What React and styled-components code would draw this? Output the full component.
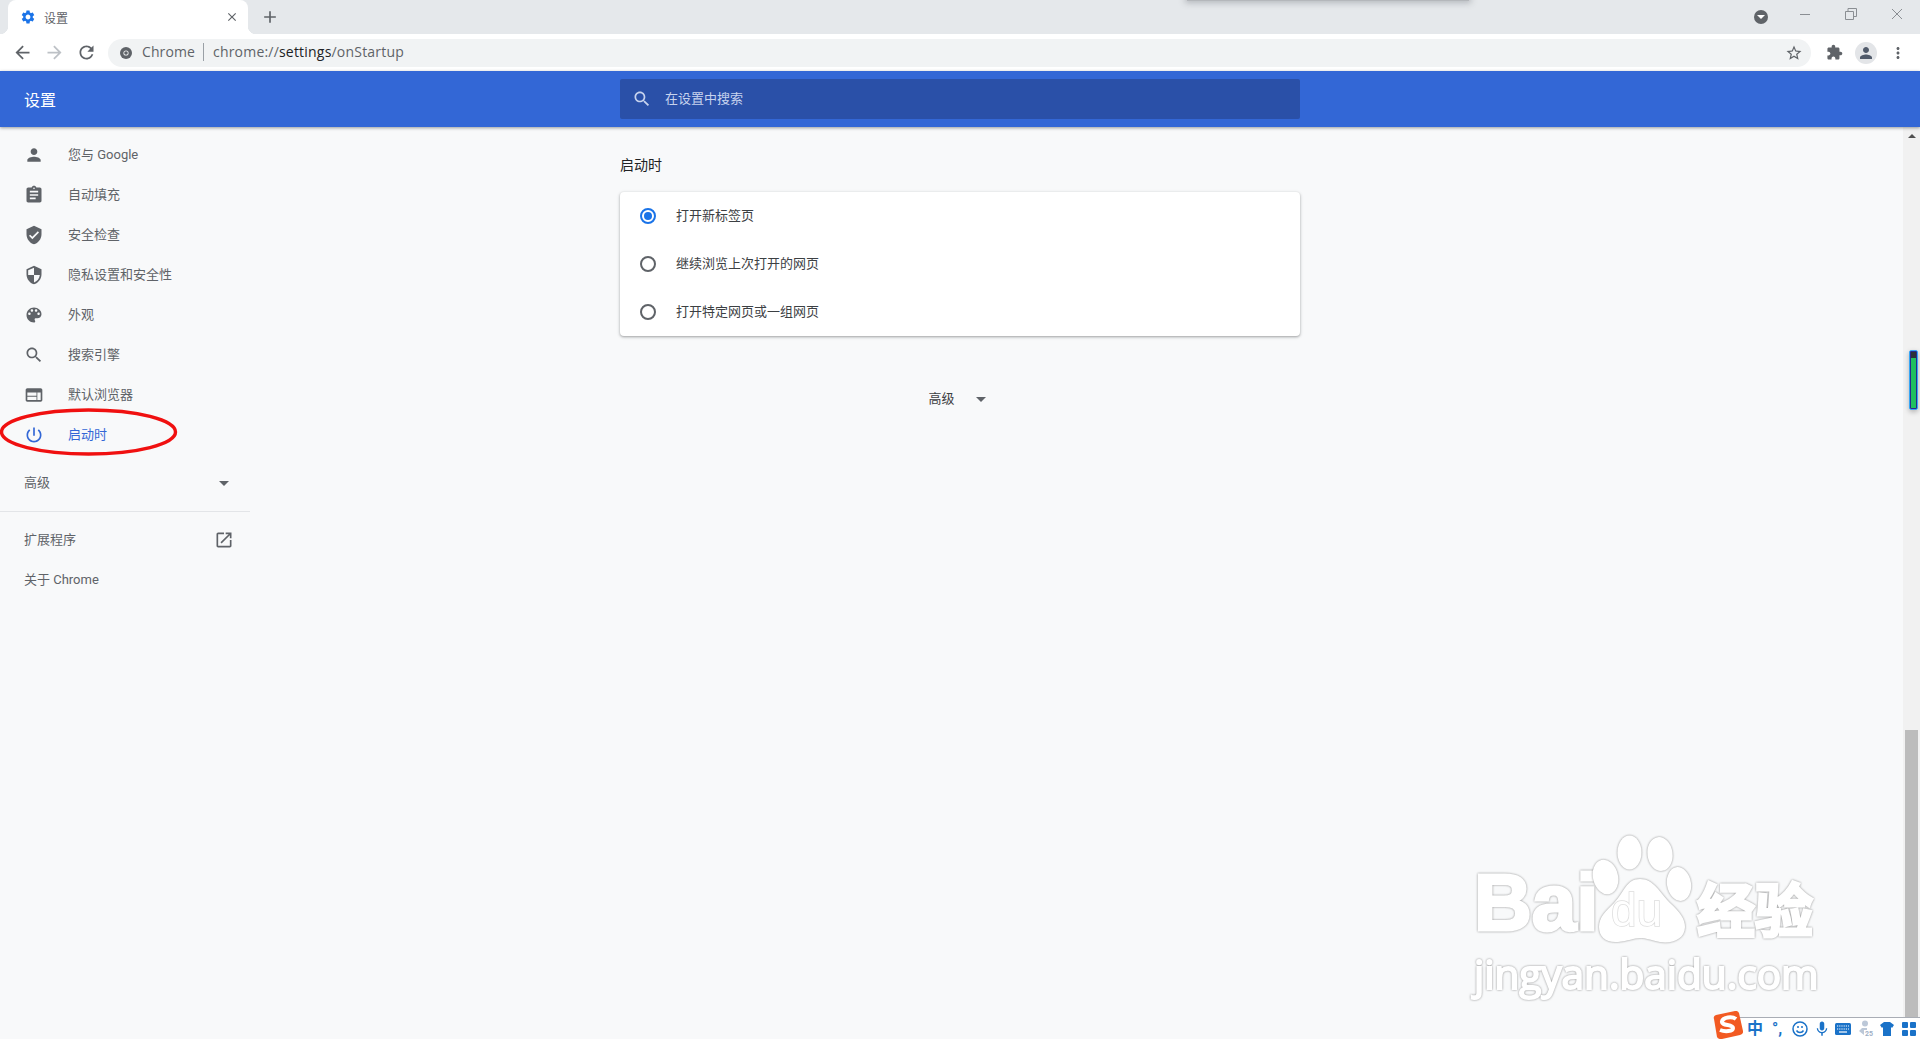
import React from "react";
import styled, { createGlobalStyle } from "styled-components";

const paths = {
  person: "M12 12c2.21 0 4-1.79 4-4s-1.79-4-4-4-4 1.79-4 4 1.79 4 4 4zm0 2c-2.67 0-8 1.34-8 4v2h16v-2c0-2.66-5.33-4-8-4z",
  assignment: "M19 3h-4.18C14.4 1.84 13.3 1 12 1c-1.3 0-2.4.84-2.82 2H5c-1.1 0-2 .9-2 2v14c0 1.1.9 2 2 2h14c1.1 0 2-.9 2-2V5c0-1.1-.9-2-2-2zm-7 0c.55 0 1 .45 1 1s-.45 1-1 1-1-.45-1-1 .45-1 1-1zm2 14H7v-2h7v2zm3-4H7v-2h10v2zm0-4H7V7h10v2z",
  verified: "M12 1L3 5v6c0 5.55 3.84 10.74 9 12 5.16-1.26 9-6.45 9-12V5l-9-4zm-2 16l-4-4 1.41-1.41L10 14.17l6.59-6.59L18 9l-8 8z",
  security: "M12 1L3 5v6c0 5.55 3.84 10.74 9 12 5.16-1.26 9-6.45 9-12V5l-9-4zm0 10.99h7c-.53 4.12-3.28 7.79-7 8.94V12H5V6.3l7-3.11v8.8z",
  palette: "M12 3c-4.97 0-9 4.03-9 9s4.03 9 9 9c.83 0 1.5-.67 1.5-1.5 0-.39-.15-.74-.39-1.01-.23-.26-.38-.61-.38-.99 0-.83.67-1.5 1.5-1.5H16c2.76 0 5-2.24 5-5 0-4.42-4.03-8-9-8zm-5.5 9c-.83 0-1.5-.67-1.5-1.5S5.67 9 6.5 9 8 9.67 8 10.5 7.33 12 6.5 12zm3-4C8.67 8 8 7.33 8 6.5S8.67 5 9.5 5s1.5.67 1.5 1.5S10.33 8 9.5 8zm5 0c-.83 0-1.5-.67-1.5-1.5S13.67 5 14.5 5s1.5.67 1.5 1.5S15.33 8 14.5 8zm3 4c-.83 0-1.5-.67-1.5-1.5S16.67 9 17.5 9s1.5.67 1.5 1.5-.67 1.5-1.5 1.5z",
  search: "M15.5 14h-.79l-.28-.27C15.41 12.59 16 11.11 16 9.5 16 5.91 13.09 3 9.5 3S3 5.91 3 9.5 5.91 16 9.5 16c1.61 0 3.09-.59 4.23-1.57l.27.28v.79l5 4.99L20.49 19l-4.99-5zm-6 0C7.01 14 5 11.99 5 9.5S7.01 5 9.5 5 14 7.01 14 9.5 11.99 14 9.5 14z",
  web: "M20 4H4c-1.1 0-2 .9-2 2v12c0 1.1.9 2 2 2h16c1.1 0 2-.9 2-2V6c0-1.1-.9-2-2-2zm-5 14H4v-4h11v4zm0-5H4V9h11v4zm5 5h-4V9h4v9z",
  power: "M13 3h-2v10h2V3zm4.83 2.17l-1.42 1.42C17.99 7.86 19 9.81 19 12c0 3.87-3.13 7-7 7s-7-3.13-7-7c0-2.19 1.01-4.14 2.58-5.42L6.17 5.17C4.23 6.82 3 9.26 3 12c0 4.97 4.03 9 9 9s9-4.03 9-9c0-2.74-1.23-5.18-3.17-6.83z",
  open: "M19 19H5V5h7V3H5c-1.11 0-2 .9-2 2v14c0 1.1.89 2 2 2h14c1.1 0 2-.9 2-2v-7h-2v7zM14 3v2h3.59l-9.83 9.83 1.41 1.41L19 6.41V10h2V3h-7z",
  gear: "M19.14 12.94c.04-.3.06-.61.06-.94 0-.32-.02-.64-.07-.94l2.03-1.58c.18-.14.23-.41.12-.61l-1.92-3.32c-.12-.22-.37-.29-.59-.22l-2.39.96c-.5-.38-1.03-.7-1.62-.94l-.36-2.54c-.04-.24-.24-.41-.48-.41h-3.84c-.24 0-.43.17-.47.41l-.36 2.54c-.59.24-1.13.57-1.62.94l-2.39-.96c-.22-.08-.47 0-.59.22L2.74 8.87c-.12.21-.08.47.12.61l2.03 1.58c-.05.3-.09.63-.09.94s.02.64.07.94l-2.03 1.58c-.18.14-.23.41-.12.61l1.92 3.32c.12.22.37.29.59.22l2.39-.96c.5.38 1.03.7 1.62.94l.36 2.54c.05.24.24.41.48.41h3.84c.24 0 .44-.17.47-.41l.36-2.54c.59-.24 1.13-.56 1.62-.94l2.39.96c.22.08.47 0 .59-.22l1.92-3.32c.12-.22.07-.47-.12-.61l-2.01-1.58zM12 15.6c-1.98 0-3.6-1.62-3.6-3.6s1.62-3.6 3.6-3.6 3.6 1.62 3.6 3.6-1.62 3.6-3.6 3.6z",
  extension: "M20.5 11H19V7c0-1.1-.9-2-2-2h-4V3.5C13 2.12 11.88 1 10.5 1S8 2.12 8 3.5V5H4c-1.1 0-1.99.9-1.99 2v3.8H3.5c1.49 0 2.7 1.21 2.7 2.7s-1.21 2.7-2.7 2.7H2V20c0 1.1.9 2 2 2h3.8v-1.5c0-1.49 1.21-2.7 2.7-2.7 1.49 0 2.7 1.21 2.7 2.7V22H17c1.1 0 2-.9 2-2v-4h1.5c1.38 0 2.5-1.12 2.5-2.5S21.88 11 20.5 11z",
  back: "M20 11H7.83l5.59-5.59L12 4l-8 8 8 8 1.41-1.41L7.83 13H20v-2z",
  forward: "M12 4l-1.41 1.41L16.17 11H4v2h12.17l-5.58 5.59L12 20l8-8z",
  reload: "M17.65 6.35C16.2 4.9 14.35 4 12 4c-4.42 0-7.99 3.58-7.99 8s3.57 8 7.99 8c3.73 0 6.84-2.55 7.73-6h-2.08c-.82 2.33-3.04 4-5.65 4-3.31 0-6-2.69-6-6s2.69-6 6-6c1.66 0 3.14.69 4.22 1.78L13 11h7V4l-2.35 2.35z",
  star: "M22 9.24l-7.19-.62L12 2 9.19 8.63 2 9.24l5.46 4.73L5.82 21 12 17.27 18.18 21l-1.63-7.03L22 9.24zM12 15.4l-3.76 2.27 1-4.28-3.32-2.88 4.38-.38L12 6.1l1.71 4.04 4.38.38-3.32 2.88 1 4.28L12 15.4z",
  close: "M19 6.41L17.59 5 12 10.59 6.41 5 5 6.41 10.59 12 5 17.59 6.41 19 12 13.41 17.59 19 19 17.59 13.41 12z",
  plus: "M19 13h-6v6h-2v-6H5v-2h6V5h2v6h6v2z",
  mic: "M12 14c1.66 0 3-1.34 3-3V5c0-1.66-1.34-3-3-3S9 3.34 9 5v6c0 1.66 1.34 3 3 3zm5.3-3c0 3-2.54 5.1-5.3 5.1S6.7 14 6.7 11H5c0 3.41 2.72 6.23 6 6.72V21h2v-3.28c3.28-.49 6-3.31 6-6.72h-1.7z",
  dots: "M12 8c1.1 0 2-.9 2-2s-.9-2-2-2-2 .9-2 2 .9 2 2 2zm0 2c-1.1 0-2 .9-2 2s.9 2 2 2 2-.9 2-2-.9-2-2-2zm0 6c-1.1 0-2 .9-2 2s.9 2 2 2 2-.9 2-2-.9-2-2-2z",
};

const Icon = ({ name, size = 20, color = "#5f6368" }) => (
  <svg width={size} height={size} viewBox="0 0 24 24" fill={color} style={{ flexShrink: 0 }}>
    <path d={paths[name]} />
  </svg>
);

const menu = [
  ["person", "您与 Google"],
  ["assignment", "自动填充"],
  ["verified", "安全检查"],
  ["security", "隐私设置和安全性"],
  ["palette", "外观"],
  ["search", "搜索引擎"],
  ["web", "默认浏览器"],
  ["power", "启动时", true],
];

const startupOptions = ["打开新标签页", "继续浏览上次打开的网页", "打开特定网页或一组网页"];

const GlobalStyle = createGlobalStyle`
  html, body { margin: 0; padding: 0; height: 100%; overflow: hidden; }
  body { font-family: Roboto, "Noto Sans CJK SC", sans-serif; font-size: 13px; background: #f8f9fa; }
  * { box-sizing: border-box; }
`;

const Page = styled.div`
  position: relative;
  height: 1039px;
  display: flex;
  flex-direction: column;
  overflow: hidden;
`;

/* the CJK fallback sits low in the line box, this lifts it back next to the icons */
const Label = styled.span`
  padding-bottom: 4px;
`;

const TabStrip = styled.div`
  position: relative;
  height: 34px;
  background: #e5e8eb;
  display: flex;
  padding-left: 8px;
  flex-shrink: 0;
`;

const Tab = styled.div`
  position: relative;
  width: 240px;
  background: #fff;
  border-radius: 8px 8px 0 0;
  display: flex;
  align-items: center;
  padding: 0 9px 0 12px;
  gap: 8px;
  font-size: 12px;
  color: #5f6368;
  &::before, &::after {
    content: "";
    position: absolute;
    bottom: 0;
    width: 8px;
    height: 8px;
  }
  &::before { left: -8px; background: radial-gradient(circle at 0 0, transparent 8px, #fff 8.5px); }
  &::after { right: -8px; background: radial-gradient(circle at 100% 0, transparent 8px, #fff 8.5px); }
`;

const TabTitle = styled.span`
  flex: 1;
`;

const NewTab = styled.div`
  width: 28px;
  margin-left: 8px;
  display: flex;
  align-items: center;
  justify-content: center;
`;

const PopupEdge = styled.div`
  position: absolute;
  left: 1187px;
  top: -3px;
  width: 282px;
  height: 4px;
  background: #b4b7bb;
  box-shadow: 0 0 6px 2px rgba(120, 124, 130, 0.45);
`;

const WindowControls = styled.div`
  margin-left: auto;
  display: flex;
  height: 28px;
`;

const ProfileDot = styled.div`
  width: 14px;
  height: 14px;
  margin: 10px 14px 0 0;
  border-radius: 50%;
  background: #5f6368;
  display: flex;
  align-items: center;
  justify-content: center;
`;

const DownTriangle = styled.span`
  width: 0;
  height: 0;
  flex-shrink: 0;
  border-left: ${(p) => p.$half || 5}px solid transparent;
  border-right: ${(p) => p.$half || 5}px solid transparent;
  border-top: ${(p) => p.$half || 5}px solid ${(p) => p.$color || "#5f6368"};
`;

const WinButton = styled.div`
  width: 46px;
  display: flex;
  align-items: center;
  justify-content: center;
`;

const Toolbar = styled.div`
  height: 37px;
  background: #fff;
  display: flex;
  align-items: center;
  padding: 0 6px;
  flex-shrink: 0;
`;

const ToolButton = styled.div`
  width: 32px;
  height: 32px;
  display: flex;
  align-items: center;
  justify-content: center;
`;

const Omnibox = styled.div`
  flex: 1;
  height: 28px;
  margin: 0 7px 0 6px;
  background: #f1f3f4;
  border-radius: 14px;
  display: flex;
  align-items: center;
  padding: 0 8px 0 12px;
  font-family: "Open Sans", "Noto Sans CJK SC", sans-serif;
  font-size: 14px;
  color: #5f6368;
`;

const OriginChip = styled.span`
  margin: 0 0 2px 10px;
  padding-right: 8px;
  border-right: 1px solid #9aa0a6;
  line-height: 18px;
  letter-spacing: 0.1px;
`;

const Url = styled.span`
  margin: 0 0 2px 9px;
  flex: 1;
  letter-spacing: 0.2px;
  b { font-weight: 400; color: #202124; }
`;

const Avatar = styled.div`
  width: 22px;
  height: 22px;
  border-radius: 50%;
  background: #e3e5e8;
  display: flex;
  align-items: center;
  justify-content: center;
`;

const Header = styled.header`
  position: relative;
  z-index: 2;
  height: 56px;
  background: #3367d6;
  display: flex;
  align-items: center;
  box-shadow: 0 1px 3px rgba(60, 64, 67, 0.5);
  flex-shrink: 0;
`;

const HeaderTitle = styled.div`
  width: 620px;
  padding-left: 24px;
  font-size: 16px;
  color: #fff;
`;

const SearchBox = styled.div`
  width: 680px;
  height: 40px;
  background: #2a50a8;
  border-radius: 2px;
  display: flex;
  align-items: center;
  gap: 13px;
  padding-left: 12px;
  color: #c7d3ee;
`;

const Body = styled.div`
  flex: 1;
  display: flex;
  min-height: 0;
`;

const Sidebar = styled.nav`
  position: relative;
  width: 250px;
  padding-top: 8px;
  flex-shrink: 0;
`;

const NavRow = styled.div`
  height: 40px;
  display: flex;
  align-items: center;
  gap: 24px;
  padding-left: 24px;
  color: ${(p) => (p.$active ? "#3367d6" : "#5f6368")};
`;

const NavPlain = styled.div`
  height: 40px;
  display: flex;
  align-items: center;
  justify-content: space-between;
  padding: 0 ${(p) => p.$right || 16}px 0 24px;
  color: #5f6368;
  margin-top: ${(p) => p.$top || 0}px;
`;

const Rule = styled.div`
  height: 1px;
  margin-top: 8px;
  background: #e3e5e8;
`;

const RedCircle = styled.svg`
  position: absolute;
  left: 0;
  top: 281px;
  width: 178px;
  height: 48px;
`;

const Main = styled.main`
  flex: 1;
  padding: 28px 0 0 370px;
`;

const Section = styled.div`
  width: 680px;
`;

const SectionTitle = styled.h2`
  margin: 0 0 17px;
  font-size: 14px;
  font-weight: 400;
  line-height: 20px;
  color: #202124;
`;

const Card = styled.div`
  background: #fff;
  border-radius: 4px;
  box-shadow: 0 1px 2px rgba(60, 64, 67, 0.3), 0 1px 3px 1px rgba(60, 64, 67, 0.15);
`;

const OptionRow = styled.label`
  height: 48px;
  display: flex;
  align-items: center;
  gap: 20px;
  padding-left: 20px;
  color: #3c4043;
`;

const Radio = styled.span`
  width: 16px;
  height: 16px;
  border-radius: 50%;
  border: 2px solid ${(p) => (p.$on ? "#1a73e8" : "#5f6368")};
  display: flex;
  align-items: center;
  justify-content: center;
  &::after {
    content: "";
    width: 8px;
    height: 8px;
    border-radius: 50%;
    background: ${(p) => (p.$on ? "#1a73e8" : "transparent")};
  }
`;

const Advanced = styled.div`
  margin-top: 43px;
  height: 40px;
  display: flex;
  align-items: center;
  justify-content: center;
  gap: 21px;
  padding-right: 6px;
  color: #3c4043;
`;

const Scrollbar = styled.div`
  width: 17px;
  flex-shrink: 0;
  background: #f1f1f1;
  display: flex;
  flex-direction: column;
  align-items: center;
  padding-top: 7px;
`;

const UpArrow = styled.span`
  width: 0;
  height: 0;
  border-left: 4px solid transparent;
  border-right: 4px solid transparent;
  border-bottom: 4px solid #505050;
`;

const ScrollThumb = styled.div`
  width: 13px;
  flex: 1;
  margin-top: 592px;
  background: #bcbcbc;
`;

const GreenWidget = styled.div`
  position: absolute;
  left: 1909px;
  top: 350px;
  width: 9px;
  height: 60px;
  border: 1px solid #38a6f5;
  border-radius: 2px;
  background: linear-gradient(#2c3138 0 7px, #1fc05f 7px 100%);
  box-shadow: inset 0 0 0 1px #27288c, 0 2px 5px rgba(0, 0, 0, 0.25);
`;

const Watermark = styled.div`
  position: absolute;
  left: 1474px;
  top: 835px;
  width: 346px;
  color: #fff;
  font-family: "Liberation Sans", "Noto Sans CJK SC", sans-serif;
`;

const WatermarkRow = styled.div`
  display: flex;
  align-items: flex-end;
  height: 109px;
`;

const outlined = `
  color: #fff;
  -webkit-text-stroke: 3px #fff;
  filter: drop-shadow(0 0 1px rgba(110, 110, 110, 0.75));
`;

const BaiText = styled.span`
  ${outlined}
  font-size: 80px;
  font-weight: 700;
  line-height: 58px;
  height: 70px;
  width: 118px;
`;

const Paw = styled.div`
  position: relative;
  width: 100px;
  height: 109px;
  flex-shrink: 0;
  filter: drop-shadow(0 0 1px rgba(110, 110, 110, 0.75));
`;

const PawText = styled.span`
  position: absolute;
  left: 19px;
  top: 50px;
  font-size: 46px;
  line-height: 50px;
  color: #fff;
  -webkit-text-stroke: 1.5px #ddd;
  paint-order: stroke fill;
`;

const JingText = styled.span`
  ${outlined}
  font-family: "Noto Sans CJK SC", sans-serif;
  font-size: 58px;
  font-weight: 700;
  line-height: 58px;
  height: 66px;
  margin-left: 5px;
  white-space: nowrap;
`;

const SiteText = styled.div`
  ${outlined}
  font-family: "Open Sans", sans-serif;
  font-size: 40.5px;
  line-height: 50px;
  margin-top: 5px;
  white-space: nowrap;
  -webkit-text-stroke-width: 2px;
`;

const ImeBar = styled.div`
  position: absolute;
  right: 0;
  bottom: 0;
  width: 198px;
  height: 22px;
  background: #fff;
  border-top: 1px solid #a9adb5;
  display: flex;
  align-items: center;
  padding-left: 26px;
  color: #1a72c8;
`;

const ImeLogo = styled.svg`
  position: absolute;
  left: -9px;
  bottom: 0;
  width: 30px;
  height: 28px;
`;

const ImeSlot = styled.span`
  width: ${(p) => p.$w}px;
  margin-right: ${(p) => p.$gap}px;
  display: flex;
  align-items: center;
  justify-content: center;
  font-weight: 700;
  font-size: ${(p) => p.$size || 15}px;
  line-height: 20px;
  flex-shrink: 0;
`;

const ImeBadge = styled.text`
  font-family: Roboto, sans-serif;
  font-size: 7px;
  font-weight: 700;
  fill: #9fb0c6;
`;

export default function App() {
  return (
    <Page>
      <GlobalStyle />
      <TabStrip>
        <Tab>
          <Icon name="gear" size={16} color="#1a73e8" />
          <TabTitle>设置</TabTitle>
          <Icon name="close" size={14} />
        </Tab>
        <NewTab>
          <Icon name="plus" size={20} />
        </NewTab>
        <PopupEdge />
        <WindowControls>
          <ProfileDot>
            <DownTriangle $half={4} $color="#fff" />
          </ProfileDot>
          <WinButton>
            <svg width="12" height="12" viewBox="0 0 12 12" stroke="#8a8e93" fill="none">
              <path d="M1 6.5h10" />
            </svg>
          </WinButton>
          <WinButton>
            <svg width="12" height="12" viewBox="0 0 12 12" stroke="#8a8e93" fill="none">
              <path d="M.5 3.5h8v8h-8zM3 3.5v-3h8.500v8h-3" />
            </svg>
          </WinButton>
          <WinButton>
            <svg width="12" height="12" viewBox="0 0 12 12" stroke="#8a8e93" fill="none">
              <path d="M1 1l10 10M11 1L1 11" />
            </svg>
          </WinButton>
        </WindowControls>
      </TabStrip>

      <Toolbar>
        <ToolButton><Icon name="back" size={21} /></ToolButton>
        <ToolButton><Icon name="forward" size={21} color="#bdc1c6" /></ToolButton>
        <ToolButton><Icon name="reload" size={21} /></ToolButton>
        <Omnibox>
          <svg width="12" height="12" viewBox="0 0 12 12">
            <circle cx="6" cy="6" r="6" fill="#5f6368" />
            <circle cx="6" cy="6" r="2.6" fill="#f1f3f4" />
            <circle cx="6" cy="6" r="1.8" fill="#5f6368" />
          </svg>
          <OriginChip>Chrome</OriginChip>
          <Url>chrome://<b>settings</b>/onStartup</Url>
          <Icon name="star" size={18} />
        </Omnibox>
        <ToolButton><Icon name="extension" size={17} /></ToolButton>
        <ToolButton>
          <Avatar><Icon name="person" size={18} color="#515b6b" /></Avatar>
        </ToolButton>
        <ToolButton><Icon name="dots" size={18} /></ToolButton>
      </Toolbar>

      <Header>
        <HeaderTitle>设置</HeaderTitle>
        <SearchBox>
          <Icon name="search" size={20} color="#c7d3ee" />
          <Label>在设置中搜索</Label>
        </SearchBox>
      </Header>

      <Body>
        <Sidebar>
          {menu.map(([icon, label, active]) => (
            <NavRow key={label} $active={active}>
              <Icon name={icon} color={active ? "#3367d6" : "#5f6368"} />
              <Label>{label}</Label>
            </NavRow>
          ))}
          <NavPlain $top={8} $right={21}>
            <Label>高级</Label>
            <DownTriangle $half={5} />
          </NavPlain>
          <Rule />
          <NavPlain $top={8}>
            <Label>扩展程序</Label>
            <Icon name="open" />
          </NavPlain>
          <NavPlain>
            <Label>关于 Chrome</Label>
          </NavPlain>
          <RedCircle viewBox="0 0 178 48">
            <ellipse cx="88.500" cy="24" rx="87" ry="22" fill="none" stroke="#f01010" strokeWidth="3.400" />
          </RedCircle>
        </Sidebar>

        <Main>
          <Section>
            <SectionTitle>启动时</SectionTitle>
            <Card>
              {startupOptions.map((label, i) => (
                <OptionRow key={label}>
                  <Radio $on={i === 0} />
                  <Label>{label}</Label>
                </OptionRow>
              ))}
            </Card>
            <Advanced>
              <Label>高级</Label>
              <DownTriangle $half={5} />
            </Advanced>
          </Section>
        </Main>

        <Scrollbar>
          <UpArrow />
          <ScrollThumb />
        </Scrollbar>
      </Body>

      <GreenWidget />

      <Watermark>
        <WatermarkRow>
          <BaiText>Bai</BaiText>
          <Paw>
            <svg width="100" height="109" viewBox="0 0 100 109" fill="#fff">
              <ellipse cx="13.500" cy="42" rx="12.500" ry="17.500" transform="rotate(-14 13.500 42)" />
              <ellipse cx="37.500" cy="17.500" rx="12" ry="17" />
              <ellipse cx="68" cy="19" rx="12.500" ry="17" transform="rotate(-8 68 19)" />
              <ellipse cx="87" cy="49" rx="12" ry="17" transform="rotate(-10 87 49)" />
              <path d="M48 44C62 44 68 58 78 68C88 77 93 84 93 92C93 104 80 109 68 107C58 105 54 103 48 103C42 103 36 106 26 107C14 108 7 102 7 92C7 82 14 76 22 68C32 58 34 44 48 44Z" />
            </svg>
            <PawText>du</PawText>
          </Paw>
          <JingText>经验</JingText>
        </WatermarkRow>
        <SiteText>jingyan.baidu.com</SiteText>
      </Watermark>

      <ImeBar>
        <ImeLogo viewBox="0 0 30 28">
          <path d="M1 8Q0 5 3 4L22 0Q25-.5 26 2L30 20Q30.500 23 27 24L9 28Q5 28.500 4 26z" fill="#f25a22" />
          <path d="M23 8C19 5 10 6 9 10.500 8 15 20 13 20 17 20 20.500 12 21 7 19" fill="none" stroke="#fff" strokeWidth="4" />
        </ImeLogo>
        <ImeSlot $w={14} $gap={9} $size={16}>中</ImeSlot>
        <ImeSlot $w={12} $gap={9} $size={16}>°,</ImeSlot>
        <ImeSlot $w={16} $gap={7}>
          <svg width="16" height="16" viewBox="0 0 16 16" fill="none" stroke="#1a72c8" strokeWidth="1.500">
            <circle cx="8" cy="8" r="7" />
            <path d="M4.500 9.500c1.500 2.500 5.500 2.500 7 0" />
            <path d="M6 5v2M10 5v2" />
          </svg>
        </ImeSlot>
        <ImeSlot $w={14} $gap={6}><Icon name="mic" size={18} color="#1a72c8" /></ImeSlot>
        <ImeSlot $w={16} $gap={8}>
          <svg width="16" height="12" viewBox="0 0 16 12">
            <rect width="16" height="12" rx="1.500" fill="#1a72c8" />
            <path d="M2 3h12M2 6h12" stroke="#fff" strokeWidth="1.200" strokeDasharray="1.200 1" />
            <path d="M4 9h8" stroke="#fff" strokeWidth="1.200" />
          </svg>
        </ImeSlot>
        <ImeSlot $w={17} $gap={4}>
          <svg width="17" height="17" viewBox="0 0 17 17" fill="#bcc8d8">
            <circle cx="6" cy="3.500" r="3" />
            <path d="M0 11l3-3h5v2H5v5z" />
            <ImeBadge x="6" y="15.500">25</ImeBadge>
          </svg>
        </ImeSlot>
        <ImeSlot $w={14} $gap={8}>
          <svg width="14" height="14" viewBox="0 0 14 14" fill="#1a72c8">
            <path d="M4 0h6l4 3-2 3-1-1v9H3V5L2 6 0 3z" />
          </svg>
        </ImeSlot>
        <ImeSlot $w={14} $gap={0}>
          <svg width="14" height="14" viewBox="0 0 14 14" fill="#1a72c8">
            <rect width="6" height="6" rx="1" />
            <rect x="8" width="6" height="6" rx="1" />
            <rect y="8" width="6" height="6" rx="1" />
            <rect x="8" y="8" width="6" height="6" rx="1" />
          </svg>
        </ImeSlot>
      </ImeBar>
    </Page>
  );
}
